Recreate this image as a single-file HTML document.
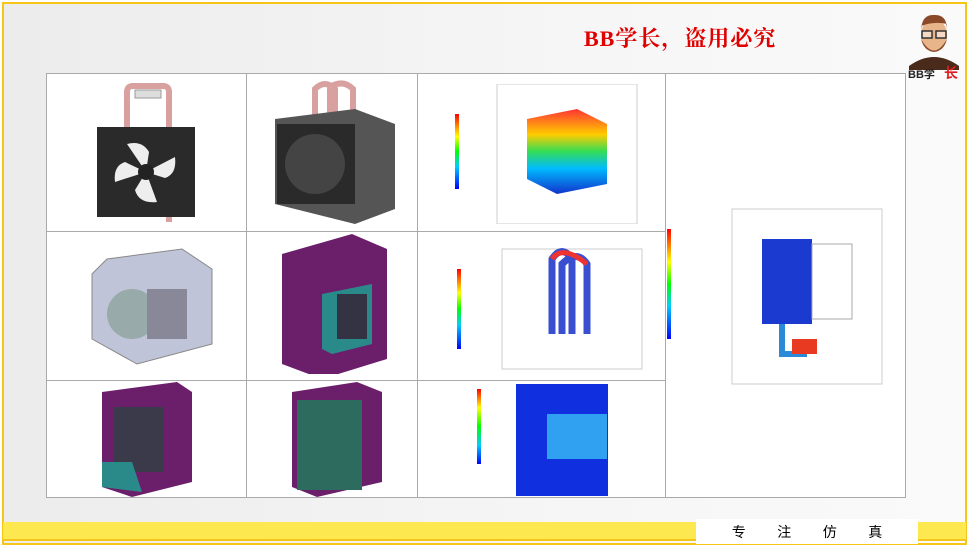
<!DOCTYPE html>
<html><head><meta charset="utf-8"><style>
*{margin:0;padding:0;box-sizing:border-box}
body{width:969px;height:549px;overflow:hidden;background:#fff;font-family:"Liberation Sans","Noto Sans CJK SC",sans-serif;position:relative}
.frame{position:absolute;left:2px;top:2px;width:965px;height:543px;border:2px solid #f5c518;background:linear-gradient(90deg,#ececec 0%,#f6f6f6 60%,#fafafa 100%)}
.title{position:absolute;left:584px;top:22px;font-family:"Liberation Serif","Noto Serif CJK SC",serif;font-weight:bold;font-size:22px;color:#e00000;letter-spacing:1px}
.tbl{position:absolute;left:46px;top:73px;width:860px;height:425px;background:#fff;border:1px solid #aaa}
.vl{position:absolute;top:0;bottom:0;width:1px;background:#aaa}
.hl{position:absolute;left:0;width:619px;height:1px;background:#aaa}
.ybar{position:absolute;left:3px;top:522px;width:963px;height:19px;background:#fde84f;border-bottom:2px solid #f5c518}
.wbox{position:absolute;left:696px;top:519px;width:222px;height:25px;background:#fff;font-size:14px;display:flex;justify-content:space-around;align-items:center;padding:0 20px}
.ab{position:absolute}
.lg{position:absolute;font-size:5px;line-height:6.5px;color:#333}
</style></head><body>
<div class="frame"></div>
<div class="title">BB学长，盗用必究</div>
<svg class="ab" style="left:905px;top:8px" width="58" height="72">
<path d="M4 58 Q29 40 54 58 L54 62 L4 62Z" fill="#4a2a1a"/>
<ellipse cx="29" cy="27" rx="13" ry="16" fill="#e8b48a"/>
<path d="M16 22 Q17 6 29 7 Q42 6 42 22 L42 16 Q29 13 16 18Z" fill="#8a4a2a"/>
<path d="M16 31 Q29 54 42 31 Q39 43 29 44 Q19 43 16 31Z" fill="#8a4a2a"/>
<rect x="17" y="23" width="10" height="7" fill="#fff" fill-opacity=".5" stroke="#333" stroke-width="1.5"/><rect x="31" y="23" width="10" height="7" fill="#fff" fill-opacity=".5" stroke="#333" stroke-width="1.5"/>
<text x="3" y="70" font-size="11" font-weight="bold" fill="#222" font-family="Liberation Sans,Noto Sans CJK SC,sans-serif">BB学</text><text x="39" y="70" font-size="14" font-weight="bold" fill="#e02020" font-family="Noto Sans CJK SC,sans-serif">长</text>
</svg>
<div class="tbl">
<div class="vl" style="left:199px"></div><div class="vl" style="left:370px"></div><div class="vl" style="left:618px"></div>
<div class="hl" style="top:157px"></div><div class="hl" style="top:306px"></div>
<svg class="ab" style="left:50px;top:8px" width="100" height="140"><path d="M30 45 V10 Q30 4 36 4 H66 Q72 4 72 10 V140" stroke="#d9a0a0" stroke-width="6" fill="none"/><rect x="38" y="8" width="26" height="8" fill="#ddd" stroke="#999"/><rect x="0" y="45" width="98" height="90" fill="#2a2a2a"/><g fill="#eee"><path d="M49 90 L30 62 Q45 58 52 70Z"/><path d="M49 90 L78 75 Q80 92 68 96Z"/><path d="M49 90 L60 120 Q42 122 38 108Z"/><path d="M49 90 L18 100 Q16 84 28 80Z"/></g><circle cx="49" cy="90" r="8" fill="#222"/></svg>
<svg class="ab" style="left:228px;top:5px" width="120" height="145"><path d="M40 40 V10 Q50 0 60 10 V40 M55 40 V8 Q68 0 78 10 V40" stroke="#d9a0a0" stroke-width="6" fill="none"/><polygon points="0,40 80,30 120,45 120,130 80,145 0,125" fill="#555"/><rect x="2" y="45" width="78" height="80" fill="#2a2a2a"/><circle cx="40" cy="85" r="30" fill="#444"/></svg>
<svg class="ab" style="left:400px;top:10px" width="200" height="140"><defs><linearGradient id="cb" x1="0" y1="1" x2="0" y2="0"><stop offset="0" stop-color="#00f"/><stop offset=".3" stop-color="#0cf"/><stop offset=".5" stop-color="#0f0"/><stop offset=".7" stop-color="#ff0"/><stop offset="1" stop-color="#f00"/></linearGradient><linearGradient id="th" x1="0" y1="0" x2="0" y2="1"><stop offset="0" stop-color="#f33"/><stop offset=".3" stop-color="#fc0"/><stop offset=".5" stop-color="#3d5"/><stop offset=".7" stop-color="#0bf"/><stop offset="1" stop-color="#13c"/></linearGradient></defs><rect x="8" y="30" width="4" height="75" fill="url(#cb)"/><rect x="50" y="0" width="140" height="140" fill="none" stroke="#ccc"/><polygon points="80,35 130,25 160,40 160,100 110,110 80,95" fill="url(#th)"/></svg>
<svg class="ab" style="left:40px;top:170px" width="130" height="125"><polygon points="20,15 95,5 125,25 125,100 50,120 5,95 5,30" fill="#c0c4d8" stroke="#888"/><circle cx="45" cy="70" r="25" fill="#9aa"/><rect x="60" y="45" width="40" height="50" fill="#889"/></svg>
<svg class="ab" style="left:235px;top:160px" width="110" height="140"><polygon points="0,20 70,0 105,15 105,125 40,145 0,130" fill="#6b1f6b"/><polygon points="40,60 90,50 90,110 50,120 40,115" fill="#2a8a8a"/><rect x="55" y="60" width="30" height="45" fill="#334"/></svg>
<svg class="ab" style="left:400px;top:165px" width="200" height="135"><rect x="10" y="30" width="4" height="80" fill="url(#cb)"/><rect x="55" y="10" width="140" height="120" fill="none" stroke="#ccc"/><path d="M105 95 V20 Q115 5 125 20 V95 M115 95 V25 Q130 10 140 25 V95" stroke="#3a4fd0" stroke-width="7" fill="none"/><path d="M105 20 Q115 5 140 25" stroke="#e33" stroke-width="5" fill="none"/></svg>
<svg class="ab" style="left:55px;top:308px" width="95" height="115"><polygon points="0,10 75,0 90,10 90,100 30,115 0,105" fill="#6b1f6b"/><rect x="12" y="25" width="50" height="65" fill="#3a3a4a"/><polygon points="0,80 30,80 40,110 0,105" fill="#2a8a8a"/></svg>
<svg class="ab" style="left:240px;top:308px" width="100" height="115"><polygon points="5,10 70,0 95,10 95,100 30,115 5,105" fill="#6b1f6b"/><rect x="10" y="18" width="65" height="90" fill="#2c6b5e"/></svg>
<div class="ab" style="left:469px;top:310px;width:92px;height:112px;background:#1030e0"></div>
<div class="ab" style="left:500px;top:340px;width:60px;height:45px;background:#30a0f0"></div>
<div class="ab" style="left:430px;top:315px;width:4px;height:75px;background:linear-gradient(#f00,#ff0,#0f0,#0cf,#00f)"></div>
<svg class="ab" style="left:620px;top:115px" width="240" height="200"><rect x="0" y="40" width="4" height="110" fill="url(#cb)"/><rect x="65" y="20" width="150" height="175" fill="none" stroke="#ccc"/><rect x="95" y="50" width="50" height="85" fill="#1a3ad0"/><rect x="145" y="55" width="40" height="75" fill="none" stroke="#aaa"/><path d="M115 135 V165 H140" stroke="#2a8ad8" stroke-width="6" fill="none"/><rect x="125" y="150" width="25" height="15" fill="#e83a20"/></svg>
</div>
<div class="ybar"></div>
<div class="wbox"><span>专</span><span>注</span><span>仿</span><span>真</span></div>
</body></html>
